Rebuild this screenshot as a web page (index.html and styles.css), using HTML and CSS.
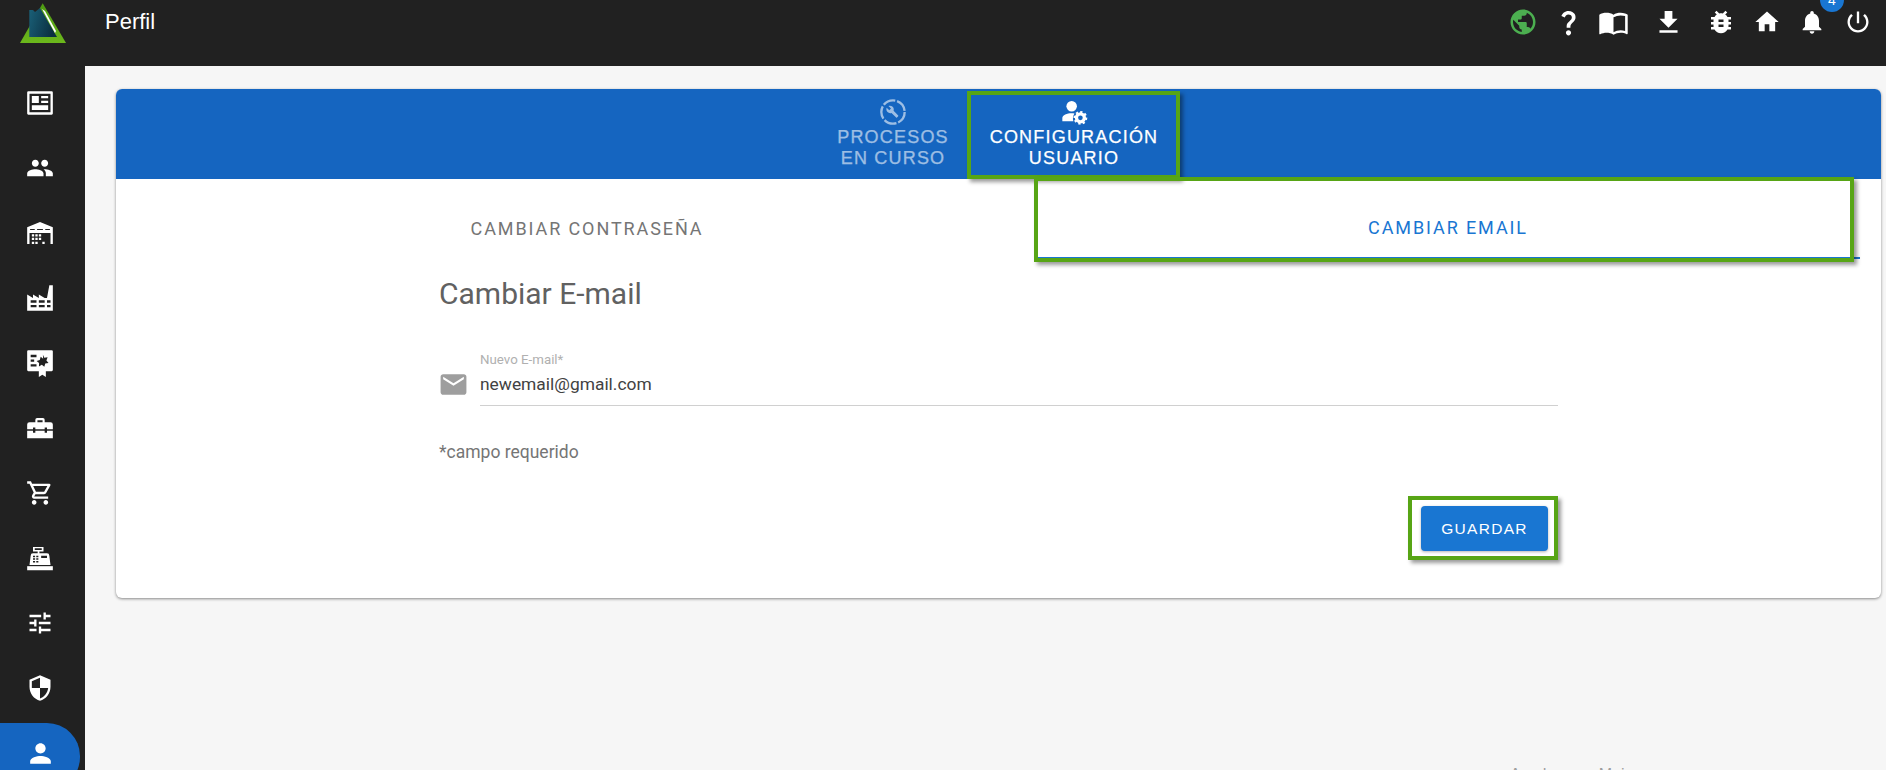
FILE: index.html
```html
<!DOCTYPE html>
<html lang="es">
<head>
<meta charset="utf-8">
<title>Perfil</title>
<link rel="stylesheet" href="styles.css">
</head>
<body>
<div class="app">
  <header class="topbar">
    <div class="logo-cell">
      <svg class="logo" viewBox="0 0 46 40">
        <defs>
          <linearGradient id="navy" x1="0" y1="0" x2="1" y2="0.3"><stop offset="0" stop-color="#1a6078"/><stop offset="1" stop-color="#0b2f40"/></linearGradient>
          <linearGradient id="leaf" x1="0" y1="0" x2="0" y2="1"><stop offset="0" stop-color="#4d9a12"/><stop offset="1" stop-color="#6cb81c"/></linearGradient>
        </defs>
        <polygon points="22.700,0.300 46,40 0,40" fill="url(#leaf)"/>
        <polygon points="9.300,7 13,7 15,9 20,5 37,34 9.300,34" fill="url(#navy)"/>
        <polygon points="22,6 25,8 36,28 35,30" fill="#fff"/>
      </svg>
    </div>
    <h1 class="page-title">Perfil</h1>
    <nav class="top-icons">
      <svg class="ti globe" viewBox="0 0 24 24"><path d="M12 2C6.48 2 2 6.48 2 12s4.48 10 10 10 10-4.48 10-10S17.52 2 12 2zm-1 17.93c-3.95-.49-7-3.85-7-7.93 0-.62.08-1.21.21-1.79L9 15v1c0 1.1.9 2 2 2v1.93zm6.9-2.54c-.26-.81-1-1.39-1.9-1.39h-1v-3c0-.55-.45-1-1-1H8v-2h2c.55 0 1-.45 1-1V7h2c1.1 0 2-.9 2-2v-.41c2.93 1.19 5 4.06 5 7.41 0 2.08-.8 3.97-2.1 5.39z"/></svg>
      <svg class="ti help" viewBox="0 0 24 24"><path d="M11.07 12.85c.77-1.39 2.25-2.21 3.11-3.44.91-1.29.4-3.7-2.18-3.7-1.69 0-2.52 1.28-2.87 2.34L6.54 6.96C7.25 4.83 9.18 3 11.99 3c2.35 0 3.96 1.07 4.78 2.41.7 1.15 1.11 3.3.03 4.9-1.2 1.77-2.35 2.31-2.97 3.45-.25.46-.35.76-.35 2.24h-2.89c-.01-.78-.13-2.05.48-3.15zM14 20c0 1.1-.9 2-2 2s-2-.9-2-2 .9-2 2-2 2 .9 2 2z"/></svg>
      <svg class="ti book" viewBox="0 0 24 24"><path d="M21 5c-1.11-.35-2.33-.5-3.5-.5-1.95 0-4.05.4-5.5 1.5-1.45-1.1-3.55-1.5-5.5-1.5S2.45 4.9 1 6v14.65c0 .25.25.5.5.5.1 0 .15-.05.25-.05C3.1 20.45 5.05 20 6.5 20c1.95 0 4.05.4 5.5 1.5 1.35-.85 3.8-1.5 5.5-1.5 1.65 0 3.35.3 4.75 1.05.1.05.15.05.25.05.25 0 .5-.25.5-.5V6c-.6-.45-1.25-.75-2-1zm0 13.5c-1.1-.35-2.3-.5-3.5-.5-1.7 0-4.15.65-5.5 1.5V8c1.35-.85 3.8-1.5 5.5-1.5 1.2 0 2.4.15 3.5.5v11.5z"/></svg>
      <svg class="ti download" viewBox="0 0 24 24"><path d="M19 9h-4V3H9v6H5l7 7 7-7zM5 18v2h14v-2H5z"/></svg>
      <svg class="ti bug" viewBox="0 0 24 24"><path d="M20 8h-2.81c-.45-.78-1.07-1.45-1.82-1.96L17 4.41 15.59 3l-2.17 2.17C12.96 5.06 12.49 5 12 5c-.49 0-.96.06-1.41.17L8.41 3 7 4.41l1.62 1.63C7.88 6.55 7.26 7.22 6.81 8H4v2h2.09c-.05.33-.09.66-.09 1v1H4v2h2v1c0 .34.04.67.09 1H4v2h2.81c1.04 1.79 2.97 3 5.19 3s4.15-1.21 5.19-3H20v-2h-2.09c.05-.33.09-.66.09-1v-1h2v-2h-2v-1c0-.34-.04-.67-.09-1H20V8zm-6 8h-4v-2h4v2zm0-4h-4v-2h4v2z"/></svg>
      <svg class="ti home" viewBox="0 0 24 24"><path d="M10 20v-6h4v6h5v-8h3L12 3 2 12h3v8z"/></svg>
      <span class="bell-wrap">
        <svg class="ti bell" viewBox="0 0 24 24"><path d="M12 22c1.1 0 2-.9 2-2h-4c0 1.1.89 2 2 2zm6-6v-5c0-3.07-1.64-5.64-4.5-6.32V4c0-.83-.67-1.5-1.5-1.5s-1.5.67-1.5 1.5v.68C7.63 5.36 6 7.92 6 11v5l-2 2v1h16v-1l-2-2z"/></svg>
        <span class="badge">4</span>
      </span>
      <svg class="ti power" viewBox="0 0 24 24"><path d="M13 3h-2v10h2V3zm4.83 2.17l-1.42 1.42C17.99 7.86 19 9.81 19 12c0 3.87-3.13 7-7 7s-7-3.13-7-7c0-2.19 1.01-4.14 2.58-5.42L6.17 5.17C4.23 6.82 3 9.26 3 12c0 4.97 4.03 9 9 9s9-4.03 9-9c0-2.74-1.23-5.18-3.17-6.83z"/></svg>
    </nav>
  </header>
  <div class="body-row">
    <aside class="sidebar">
      <div class="side-item"><svg class="si" viewBox="0 0 24 24"><path fill-rule="evenodd" d="M2 2h20a1 1 0 0 1 1 1v18a1 1 0 0 1-1 1H2a1 1 0 0 1-1-1V3a1 1 0 0 1 1-1zm1 2v16h18V4H3zm2 2h6v6H5V6zm8 0h6v2h-6V6zm0 4h6v2h-6v-2zM5 14h14v4H5v-4z"/></svg></div>
      <div class="side-item"><svg class="si" viewBox="0 0 24 24"><path d="M16 11c1.66 0 2.99-1.34 2.99-3S17.66 5 16 5c-1.66 0-3 1.34-3 3s1.34 3 3 3zm-8 0c1.66 0 2.99-1.34 2.99-3S9.66 5 8 5C6.34 5 5 6.34 5 8s1.34 3 3 3zm0 2c-2.33 0-7 1.17-7 3.5V19h14v-2.5c0-2.33-4.67-3.5-7-3.5zm8 0c-.29 0-.62.02-.97.05 1.16.84 1.97 1.97 1.97 3.45V19h6v-2.5c0-2.33-4.67-3.5-7-3.5z"/></svg></div>
      <div class="side-item"><svg class="si" viewBox="0 0 24 24"><path fill-rule="evenodd" d="M12 2.500L23 7v14.500h-2V12H3v9.500H1V7l11-4.500zM3.500 8.500v1h4v-1h-4zm6 0v1h5v-1h-5zm7 0v1h4v-1h-4z"/><path d="M5 13h2v2H5zM8 13h2v2H8zM11 13h2v2h-2zM5 16h2v2H5zM8 16h2v2H8zM11 16h2v2h-2zM5 19.500h2v2H5zM8 19.500h2v2H8zM14 19.500h2v2h-2z"/></svg></div>
      <div class="side-item"><svg class="si" viewBox="0 0 24 24"><path fill-rule="evenodd" d="M20 1h3v22H1V9l5 3V9l5 3V9l5 3 2 0 2-11zM4 14v2h5v-2H4zm7 0v2h5v-2h-5zm7 0v2h3v-2h-3zM4 18v2h5v-2H4zm7 0v2h5v-2h-5zm7 0v2h3v-2h-3z"/></svg></div>
      <div class="side-item"><svg class="si" viewBox="0 0 24 24"><path fill-rule="evenodd" d="M2 1h20a1 1 0 0 1 1 1v16a1 1 0 0 1-1 1h-5v5l-3-2-3 2v-5H2a1 1 0 0 1-1-1V2a1 1 0 0 1 1-1zm2 4v2h5V5H4zm0 4v2h3V9H4zm0 4v2h5v-2H4zm10.500-8l1.200 2.500 2.800-.4-1 2.700 1.800 2.200-2.800.5-.8 2.700-2.200-1.800-2.400 1.500.1-2.800-2.100-1.900 2.700-.8.8-2.700 2.100 1.700z"/></svg></div>
      <div class="side-item"><svg class="si" viewBox="0 0 24 24"><path fill-rule="evenodd" d="M8 7V5a1.500 1.500 0 0 1 1.500-1.500h5A1.500 1.500 0 0 1 16 5v2h5a2 2 0 0 1 2 2v4h-5v-1.500h-2V13H8v-1.500H6V13H1V9a2 2 0 0 1 2-2h5zm1.800-.5V7h4.400V5.300H9.800v1.200z"/><path d="M1 14.300h5V16h2v-1.700h8V16h2v-1.700h5v6.400H1z"/></svg></div>
      <div class="side-item"><svg class="si" viewBox="0 0 24 24"><path d="M15.550 13c.75 0 1.410-.41 1.750-1.030l3.580-6.490c.37-.66-.11-1.480-.87-1.480H5.210l-.94-2H1v2h2l3.600 7.590-1.350 2.440C4.520 15.370 5.480 17 7 17h12v-2H7l1.100-2h7.450zM6.160 6h12.150l-2.760 5H8.530L6.160 6zM7 18c-1.100 0-1.990.9-1.990 2S5.900 22 7 22s2-.9 2-2-.9-2-2-2zm10 0c-1.100 0-1.990.9-1.990 2s.89 2 1.990 2 2-.9 2-2-.9-2-2-2z"/></svg></div>
      <div class="side-item"><svg class="si" viewBox="0 0 24 24"><path fill-rule="evenodd" d="M6 2.500h9v4h-3.500V8H18a2 2 0 0 1 2 2l1 8H3l1-8a2 2 0 0 1 2-2h4V6.500H6v-4zm1.500 1.200v1.500h6V3.700h-6zM6 10v1.300h1.800V10H6zm2.800 0v1.300h1.800V10H8.800zM6 12.300v1.300h1.800v-1.300H6zm2.800 0v1.300h1.800v-1.300H8.800zM6 14.600v1.300h1.800v-1.300H6zm2.800 0v1.300h1.800v-1.300H8.800zM13 10v2h5v-2h-5z"/><path d="M1 19h22v3.500H1z"/></svg></div>
      <div class="side-item"><svg class="si" viewBox="0 0 24 24"><path d="M3 17v2h6v-2H3zM3 5v2h10V5H3zm10 16v-2h8v-2h-8v-2h-2v6h2zM7 9v2H3v2h4v2h2V9H7zm14 4v-2H11v2h10zm-6-4h2V7h4V5h-4V3h-2v6z"/></svg></div>
      <div class="side-item"><svg class="si" viewBox="0 0 24 24"><path d="M12 1L3 5v6c0 5.550 3.840 10.740 9 12 5.160-1.260 9-6.450 9-12V5l-9-4zm0 10.990h7c-.53 4.120-3.280 7.790-7 8.940V12H5V6.300l7-3.110v8.800z"/></svg></div>
      <div class="side-item active"><svg class="si" viewBox="0 0 24 24"><path d="M12 12c2.210 0 4-1.790 4-4s-1.790-4-4-4-4 1.790-4 4 1.790 4 4 4zm0 2c-2.670 0-8 1.340-8 4v2h16v-2c0-2.660-5.330-4-8-4z"/></svg></div>
    </aside>
    <main class="content">
      <section class="card">
        <div class="card-head">
          <div class="head-tab dim">
            <svg class="ht-icon" viewBox="0 0 24 24"><circle cx="12" cy="12" r="10" fill="none" stroke="currentColor" stroke-width="2" stroke-dasharray="11 1.600"/><path d="M16.500 15l-4-4c.4-1.200.1-2.500-.8-3.400-1-1-2.400-1.200-3.600-.7l2.200 2.200-1.500 1.500-2.200-2.200c-.6 1.200-.3 2.600.7 3.600.9.900 2.200 1.200 3.400.8l4 4c.2.200.5.200.7 0l.9-1c.3-.2.300-.5.200-.8z"/></svg>
            <span>PROCESOS<br>EN CURSO</span>
          </div>
          <div class="head-tab wide">
            <svg class="ht-icon" viewBox="0 0 24 24"><circle cx="10" cy="7" r="4.500"/><path d="M10 13c-4 0-8 1.500-8 4v3h9.500c-.7-1.800-.6-4.500.9-6.700-.8-.2-1.600-.3-2.400-.3z"/><circle cx="17.500" cy="17" r="3.400" fill="none" stroke="currentColor" stroke-width="2.800"/><circle cx="17.500" cy="17" r="5" fill="none" stroke="currentColor" stroke-width="1.800" stroke-dasharray="1.900 1.900"/></svg>
            <span>CONFIGURACIÓN<br>USUARIO</span>
          </div>
          <div class="note head-note"></div>
        </div>
        <div class="tabs">
          <div class="tab">CAMBIAR CONTRASEÑA</div>
          <div class="tab selected">CAMBIAR EMAIL<div class="note tab-note"></div></div>
        </div>
        <form class="form">
          <h2 class="form-title">Cambiar E-mail</h2>
          <div class="field">
            <svg class="mail" viewBox="0 0 24 24"><path d="M20 4H4c-1.100 0-1.990.9-1.990 2L2 18c0 1.100.9 2 2 2h16c1.100 0 2-.9 2-2V6c0-1.100-.9-2-2-2zm0 4l-8 5-8-5V6l8 5 8-5v2z"/></svg>
            <div class="field-body">
              <div class="field-label">Nuevo E-mail*</div>
              <div class="field-value">newemail@gmail.com</div>
            </div>
          </div>
          <p class="req">*campo requerido</p>
          <div class="actions">
            <button type="button" class="save">GUARDAR<span class="note save-note"></span></button>
          </div>
        </form>
      </section>
      <footer class="foot">Ayudanos a Mejorar</footer>
    </main>
  </div>
</div>
</body>
</html>
```
FILE: styles.css
```css
* { box-sizing: border-box; }
html, body { margin: 0; height: 100%; overflow: hidden; }
body { font-family: "Liberation Sans", Arial, sans-serif; background: #f6f6f6; }
.app { width: 1886px; height: 770px; display: flex; flex-direction: column; overflow: hidden; }

.topbar { height: 66px; flex: none; background: #212121; display: flex; align-items: flex-start; position: relative; }
.logo-cell { width: 85px; padding: 3px 0 0 20px; flex: none; }
.logo { width: 46px; height: 40px; display: block; }
.page-title { margin: 9px 0 0 20px; font-size: 22px; line-height: 26px; font-weight: 400; color: #fff; }
.top-icons { margin-left: auto; padding: 6px 14px 0 0; height: 38px; display: flex; align-items: center; }
.ti { width: 28px; height: 28px; fill: #fff; display: block; flex: none; }
.globe { width: 30px; height: 30px; fill: #4caf50; }
.help { width: 31px; height: 31px; margin-left: 14.5px; }
.book { width: 31px; height: 31px; margin-left: 14px; }
.download { width: 31px; height: 31px; margin-left: 24px; }
.bug { width: 30px; height: 30px; margin-left: 22.500px; }
.home { margin-left: 17px; }
.bell-wrap { position: relative; display: block; margin-left: 17px; }
.badge { position: absolute; left: 22px; top: -20px; width: 24px; height: 24px; border-radius: 50%; background: #1976d2; color: #fff; font-size: 14px; line-height: 24px; text-align: center; }
.power { margin-left: 18px; }

.body-row { flex: 1; display: flex; min-height: 0; }
.sidebar { width: 85px; flex: none; background: #212121; padding-top: 4px; overflow: hidden; }
.side-item { width: 80px; height: 65px; display: flex; align-items: center; justify-content: center; }
.side-item.active { background: #1565c0; border-radius: 0 33px 33px 0; height: 67px; margin-top: 3px; padding-bottom: 6px; }
.si { width: 28px; height: 28px; fill: #fff; display: block; }
.active .si { width: 31px; height: 31px; }

.content { flex: 1; padding: 23px 5px 0 31px; min-width: 0; position: relative; }
.card { background: #fff; border-radius: 6px; box-shadow: 0 1px 3px rgba(0,0,0,.45); height: 509px; }
.card-head { height: 90px; background: #1565c0; border-radius: 6px 6px 0 0; display: flex; justify-content: center; padding: 9px 0 0 3px; position: relative; color: #fff; }
.head-tab { width: 148px; display: flex; flex-direction: column; align-items: center; font-family: "Liberation Sans", Arial, sans-serif; font-size: 18px; line-height: 21px; letter-spacing: 1.200px; text-align: center; -webkit-text-stroke: .25px currentColor; }
.head-tab.dim { opacity: .58; }
.head-tab.wide { width: 214px; }
.ht-icon { width: 28px; height: 28px; fill: currentColor; display: block; margin-bottom: 1px; }

.note { position: absolute; border: 4px solid #57a515; box-shadow: 3px 3px 4px rgba(0,0,0,.4); pointer-events: none; }
.head-note { left: 851px; top: 2px; width: 213px; height: 88px; }

.tabs { display: flex; height: 80px; padding-left: 207px; position: relative; }
.tab { height: 80px; font-family: Roboto, sans-serif; font-size: 18px; letter-spacing: 1.900px; color: #757575; display: flex; align-items: center; justify-content: center; width: 528px; padding-top: 18px; }
.tab.selected { width: 826px; margin-left: 183px; padding-left: 2px; color: #1976d2; border-bottom: 2px solid #1976d2; position: relative; }
.tab-note { left: 0; top: -2px; width: 820px; height: 85px; }

.form { width: 1119px; margin-left: 323px; }
.form-title { margin: 15px 0 0; font-family: Roboto, sans-serif; font-size: 30px; line-height: 40px; font-weight: 400; color: #616161; }
.field { display: flex; align-items: flex-end; margin-top: 39px; }
.mail { width: 31px; height: 31px; fill: #9e9e9e; display: block; margin: 0 11px 6px -1px; flex: none; }
.field-body { flex: 1; border-bottom: 1px solid #d0d0d0; }
.field-label { font-family: Roboto, sans-serif; font-size: 13.300px; line-height: 14px; color: #b0b0b0; }
.field-value { font-family: Roboto, sans-serif; font-size: 17.400px; line-height: 30px; padding: 2px 0 6px; color: #424242; }
.req { margin: 34px 0 0; font-family: Roboto, sans-serif; font-size: 17.500px; line-height: 24px; color: #757575; }
.actions { display: flex; justify-content: flex-end; margin-top: 42px; }
.save { position: relative; width: 127px; height: 45px; border: 0; border-radius: 4px; background: #1976d2; color: #fff; font-family: "Liberation Sans", Arial, sans-serif; font-size: 15.500px; letter-spacing: 1.300px; box-shadow: 0 1px 3px rgba(0,0,0,.3); padding: 0; margin-right: 10px; }
.save-note { left: -13px; top: -10px; width: 150px; height: 64px; }

.foot { position: absolute; right: 233px; bottom: -15px; font-size: 16px; line-height: 20px; color: #9e9e9e; }
```
